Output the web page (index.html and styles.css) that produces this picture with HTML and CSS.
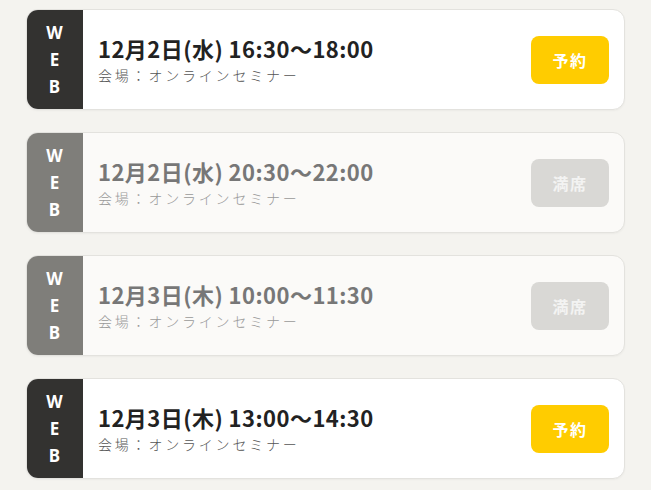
FILE: index.html
```html
<!DOCTYPE html>
<html lang="ja">
<head>
<meta charset="utf-8">
<link rel="stylesheet" href="styles.css">
</head>
<body>
<ul class="list">
  <li class="card">
    <div class="tag"><span>W</span><span>E</span><span>B</span></div>
    <div class="info">
      <p class="date">12月2日(水) 16:30〜18:00</p>
      <p class="place">会場：オンラインセミナー</p>
    </div>
    <button class="btn">予約</button>
  </li>
  <li class="card is-full">
    <div class="tag"><span>W</span><span>E</span><span>B</span></div>
    <div class="info">
      <p class="date">12月2日(水) 20:30〜22:00</p>
      <p class="place">会場：オンラインセミナー</p>
    </div>
    <button class="btn">満席</button>
  </li>
  <li class="card is-full">
    <div class="tag"><span>W</span><span>E</span><span>B</span></div>
    <div class="info">
      <p class="date">12月3日(木) 10:00〜11:30</p>
      <p class="place">会場：オンラインセミナー</p>
    </div>
    <button class="btn">満席</button>
  </li>
  <li class="card">
    <div class="tag"><span>W</span><span>E</span><span>B</span></div>
    <div class="info">
      <p class="date">12月3日(木) 13:00〜14:30</p>
      <p class="place">会場：オンラインセミナー</p>
    </div>
    <button class="btn">予約</button>
  </li>
</ul>
</body>
</html>
```
FILE: styles.css
```css
* { box-sizing: border-box; }
html, body { margin: 0; padding: 0; }
body {
  background: #f4f3ef;
  font-family: "Noto Sans CJK JP", "Noto Sans", sans-serif;
  color: #222;
}
.list {
  list-style: none;
  margin: 0;
  padding: 9px 26px;
  display: flex;
  flex-direction: column;
  gap: 22px;
}
.card {
  display: flex;
  align-items: center;
  height: 101px;
  background: #fff;
  border: 1px solid #e3e2de;
  border-radius: 12px;
  box-shadow: 0 1px 2px rgba(0,0,0,0.04);
  overflow: hidden;
}
.tag {
  align-self: stretch;
  width: 57px;
  margin: -1px 0 -1px -1px;
  background: #333230;
  color: #fff;
  display: flex;
  flex-direction: column;
  align-items: center;
  justify-content: center;
  font-family: "Noto Sans", sans-serif;
  font-weight: 700;
  font-size: 17px;
  line-height: 27px;
}
.info {
  flex: 1;
  padding-left: 15px;
}
.date {
  margin: 0 0 2px;
  font-size: 22px;
  font-weight: 700;
  line-height: 28px;
  letter-spacing: 0.45px;
  color: #222;
}
.place {
  margin: 0;
  font-size: 14px;
  font-weight: 300;
  line-height: 22px;
  letter-spacing: 2.8px;
  color: #555;
}
.btn {
  width: 78px;
  height: 48px;
  margin-right: 15px;
  border: none;
  border-radius: 8px;
  background: #ffcc00;
  color: #fff;
  font-family: "Noto Sans CJK JP", sans-serif;
  font-weight: 700;
  font-size: 16px;
  letter-spacing: 1.5px;
}
.is-full { background: #fbfaf8; }
.is-full .tag { background: #7f7e7a; }
.is-full .date { color: #777; }
.is-full .place { color: #999; }
.is-full .btn { background: #d9d8d5; color: #f3f3f2; }
```
